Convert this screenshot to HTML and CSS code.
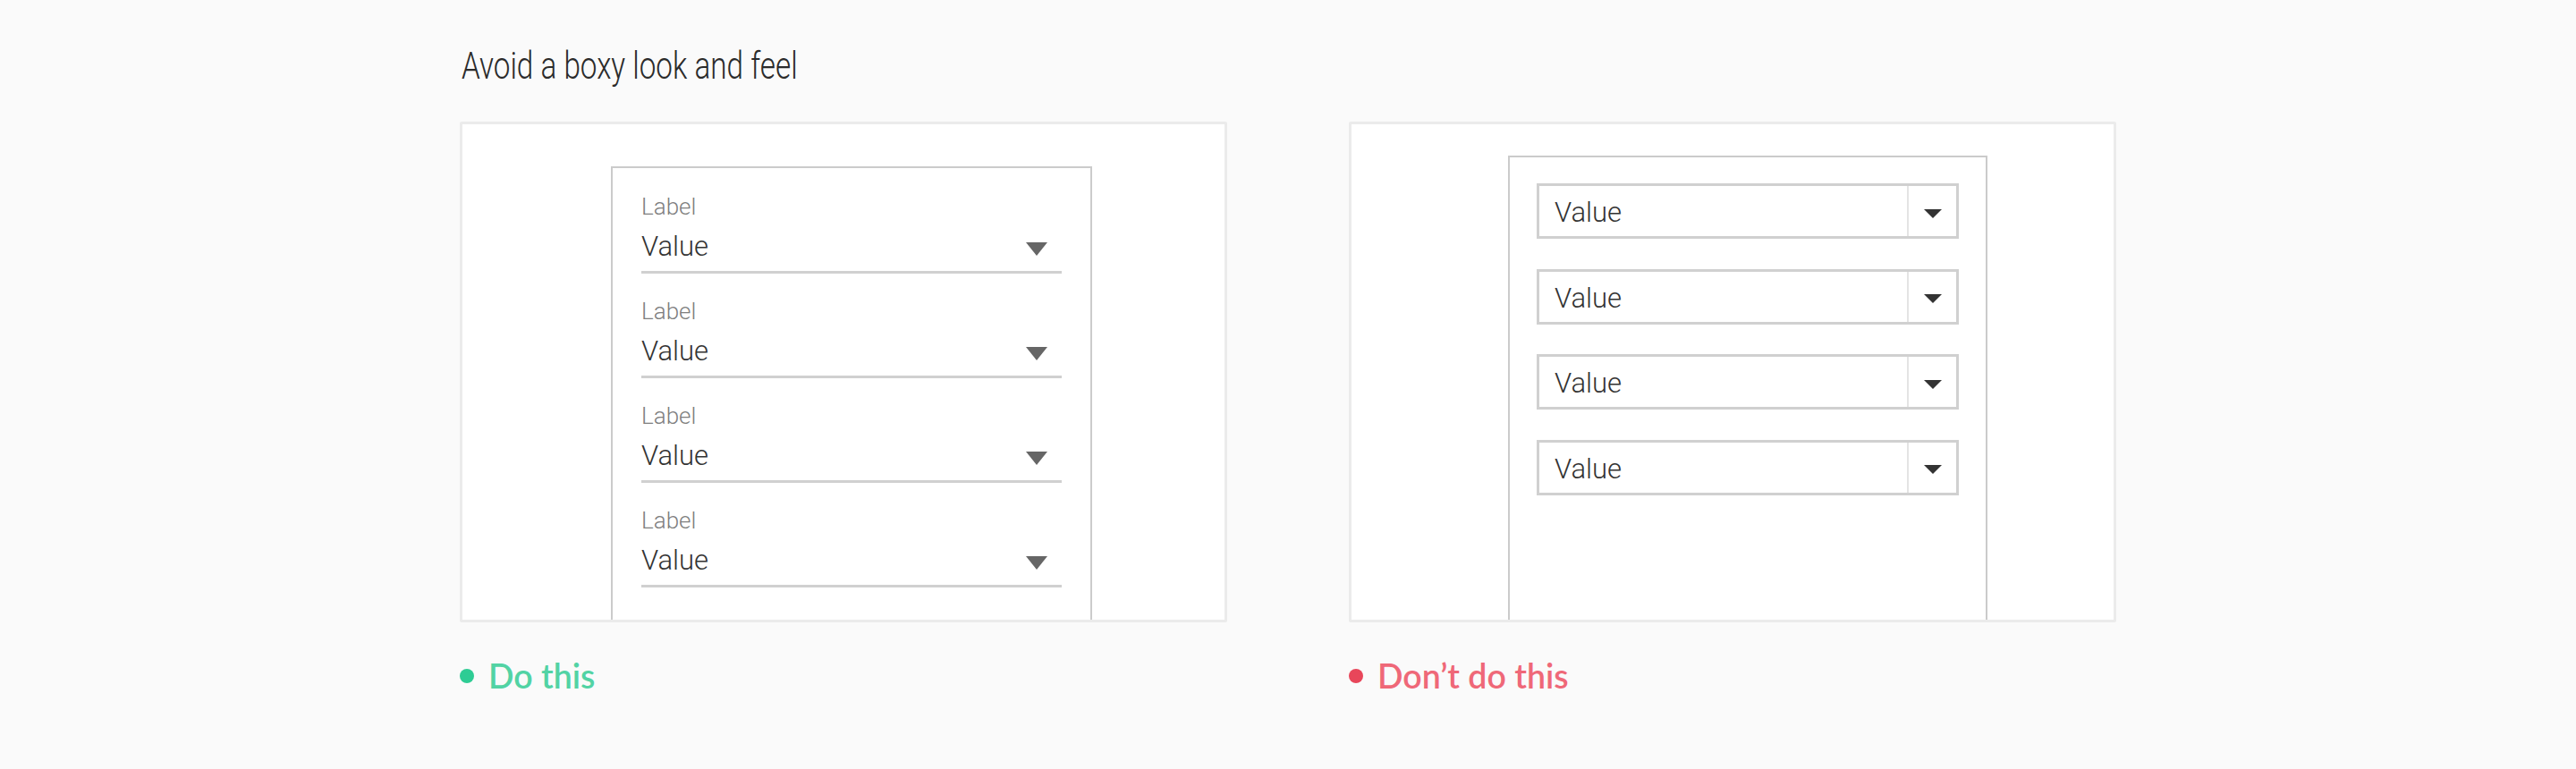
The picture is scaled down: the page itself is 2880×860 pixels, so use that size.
FILE: index.html
```html
<!DOCTYPE html>
<html lang="en">
<head>
<meta charset="utf-8">
<title>Avoid a boxy look and feel</title>
<link rel="stylesheet" href="styles.css">
</head>
<body>
<main class="page">
  <h1 class="title"><span class="title-text">Avoid a boxy look and feel</span></h1>
  <div class="examples">
    <section class="example">
      <div class="panel">
        <div class="card card-good">
          <div class="field">
            <div class="field-label">Label</div>
            <div class="field-row"><span class="field-value">Value</span><span class="caret caret-good"></span></div>
          </div>
          <div class="field">
            <div class="field-label">Label</div>
            <div class="field-row"><span class="field-value">Value</span><span class="caret caret-good"></span></div>
          </div>
          <div class="field">
            <div class="field-label">Label</div>
            <div class="field-row"><span class="field-value">Value</span><span class="caret caret-good"></span></div>
          </div>
          <div class="field">
            <div class="field-label">Label</div>
            <div class="field-row"><span class="field-value">Value</span><span class="caret caret-good"></span></div>
          </div>
        </div>
      </div>
      <p class="caption caption-do"><span class="dot"></span>Do this</p>
    </section>
    <section class="example">
      <div class="panel">
        <div class="card card-bad">
          <div class="select"><span class="select-value">Value</span><span class="select-btn"><span class="caret caret-bad"></span></span></div>
          <div class="select"><span class="select-value">Value</span><span class="select-btn"><span class="caret caret-bad"></span></span></div>
          <div class="select"><span class="select-value">Value</span><span class="select-btn"><span class="caret caret-bad"></span></span></div>
          <div class="select"><span class="select-value">Value</span><span class="select-btn"><span class="caret caret-bad"></span></span></div>
        </div>
      </div>
      <p class="caption caption-dont"><span class="dot"></span>Don’t do this</p>
    </section>
  </div>
</main>
</body>
</html>
```

FILE: styles.css
```css
* {
  box-sizing: border-box;
}

html, body {
  margin: 0;
  padding: 0;
  background: #fafafa;
}

body {
  font-family: Roboto, "Liberation Sans", sans-serif;
  color: #333;
}

.page {
  padding: 49px 0 0 514px;
}

.title {
  margin: 0 0 37px 2px;
  font-size: 42px;
  line-height: 50px;
  font-weight: 300;
  color: #2b2b2b;
  height: 50px;
}

.title-text {
  display: inline-block;
  transform: scaleX(0.792);
  transform-origin: left center;
  white-space: nowrap;
}

.examples {
  display: grid;
  grid-template-columns: 858px 858px;
  column-gap: 136px;
}

.example {
  display: flex;
  flex-direction: column;
}

.panel {
  height: 560px;
  background: #fff;
  border: 3px solid #ebebeb;
  border-radius: 2px;
  overflow: hidden;
}

.card {
  background: #fff;
  border: 2px solid #cbcbcb;
  border-bottom: none;
  height: 640px;
}

.card-good {
  width: 538px;
  margin: 47px 0 0 166px;
  padding: 28px 32px 0;
}

.card-bad {
  width: 536px;
  margin: 35px 0 0 175px;
  padding: 29px 30px 0;
}

/* Do this: underline fields */
.field {
  margin-bottom: 27px;
}

.field-label {
  font-size: 26px;
  line-height: 30px;
  font-weight: 300;
  color: #7f7f7f;
}

.field-row {
  display: flex;
  align-items: center;
  justify-content: space-between;
  margin-top: 11px;
  height: 49px;
  padding-bottom: 8px;
  border-bottom: 3px solid #d0d0d0;
}

.field-value {
  font-size: 31px;
  line-height: 38px;
  font-weight: 300;
  color: #333;
}

.caret {
  display: block;
  width: 0;
  height: 0;
}

.caret-good {
  border-left: 12px solid transparent;
  border-right: 12px solid transparent;
  border-top: 15px solid #666;
  margin: 5px 16px 0 0;
}

/* Don't do this: boxed selects */
.select {
  display: flex;
  height: 62px;
  border: 3px solid #d0d0d0;
  margin-bottom: 33.5px;
}

.select-value {
  flex: 1;
  padding: 4px 0 0 17px;
  font-size: 31px;
  line-height: 52px;
  font-weight: 300;
  color: #333;
}

.select-btn {
  width: 55px;
  border-left: 2px solid #e4e4e4;
  display: flex;
  align-items: center;
  justify-content: center;
}

.caret-bad {
  border-left: 10px solid transparent;
  border-right: 10px solid transparent;
  border-top: 10px solid #333;
  margin-top: 5px;
}

/* Captions */
.caption {
  display: flex;
  align-items: center;
  margin: 38px 0 0;
  font-family: Lato, "Open Sans", sans-serif;
  font-size: 37.5px;
  line-height: 44px;
  font-weight: 600;
}

.dot {
  width: 16px;
  height: 16px;
  border-radius: 50%;
  margin-right: 16px;
  flex: none;
}

.caption-do {
  color: #52d3a4;
}

.caption-do .dot {
  background: #2ecc94;
}

.caption-dont {
  color: #ef6878;
}

.caption-dont .dot {
  background: #e8465a;
}
```
